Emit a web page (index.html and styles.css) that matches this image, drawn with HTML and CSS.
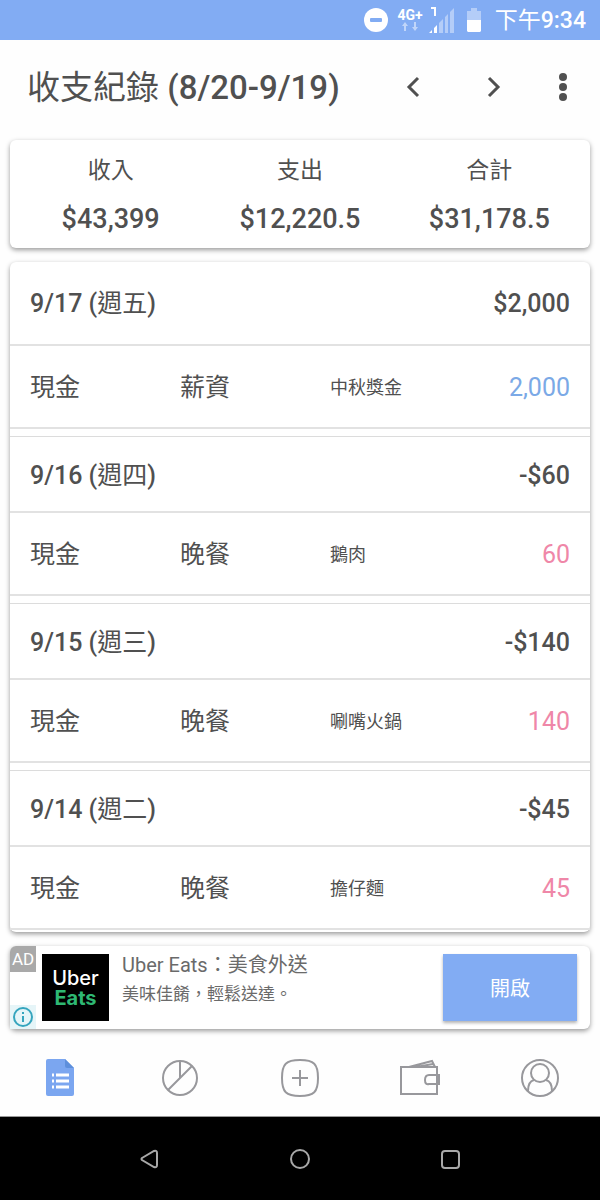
FILE: index.html
```html
<!DOCTYPE html>
<html lang="zh-Hant">
<head>
    <meta charset="UTF-8">
    <meta name="viewport" content="width=device-width, initial-scale=1">
    <title>收支紀錄</title>
    <link rel="stylesheet" href="styles.css">
</head>
<body>
<div class="status-bar">
    <svg class="dnd" width="24" height="24" viewBox="0 0 24 24">
        <circle cx="12" cy="12" r="12" fill="#fff"/>
        <rect x="6" y="10" width="12" height="4" rx="1" fill="#82acf3"/>
    </svg>
    <div class="network">
        <span>4G+</span>
        <svg width="16" height="10" viewBox="0 0 16 10" fill="#fff" opacity=".5">
            <path d="M3 0l3 4H4v5H2V4H0zM13 9l-3-4h2V0h2v5h2z"/>
        </svg>
    </div>
    <svg class="signal" width="26" height="28" viewBox="0 0 26 28">
        <path d="M2 2h4v8" fill="none" stroke="#fff" stroke-width="2"/>
        <path d="M0 27l3-3v3zM5 27v-5l3-3v8z" fill="#fff"/>
        <path d="M10 17l4-4v14h-4zM16 11l3-3v19h-3zM21 6l4-4v25h-4z" fill="#fff" opacity=".4"/>
    </svg>
    <svg class="battery" width="14" height="24" viewBox="0 0 14 24">
        <path d="M4 0h6v3h4v9H0V3h4z" fill="#fff" opacity=".4"/>
        <path d="M0 12h14v11l-1 1H1l-1-1z" fill="#fff"/>
    </svg>
    <span class="time"><span class="cjk">下午</span>9:34</span>
</div>

<header class="title-bar">
    <h1><span class="cjk">收支紀錄</span> (8/20-9/19)</h1>
    <button type="button" class="icon-btn" aria-label="上個月">
        <svg width="24" height="24" viewBox="0 0 24 24" fill="none" stroke="#505050" stroke-width="3"><path d="M17 3L8 12l9 9"/></svg>
    </button>
    <button type="button" class="icon-btn" aria-label="下個月">
        <svg width="24" height="24" viewBox="0 0 24 24" fill="none" stroke="#505050" stroke-width="3"><path d="M8 3l9 9-9 9"/></svg>
    </button>
    <button type="button" class="icon-btn more" aria-label="更多">
        <svg width="8" height="28" viewBox="0 0 8 28" fill="#505050"><circle cx="4" cy="4" r="4"/><circle cx="4" cy="14" r="4"/><circle cx="4" cy="24" r="4"/></svg>
    </button>
</header>

<main>
    <dl class="card summary">
        <div><dt>收入</dt><dd>$43,399</dd></div>
        <div><dt>支出</dt><dd>$12,220.5</dd></div>
        <div><dt>合計</dt><dd>$31,178.5</dd></div>
    </dl>

    <div class="card records">
        <section class="day">
            <h2><span>9/17 (<span class="cjk">週五</span>)</span><span>$2,000</span></h2>
            <table>
                <tr><td class="account">現金</td><td class="type">薪資</td><td class="memo">中秋獎金</td><td class="amount income">2,000</td></tr>
            </table>
        </section>
        <section class="day">
            <h2><span>9/16 (<span class="cjk">週四</span>)</span><span>-$60</span></h2>
            <table>
                <tr><td class="account">現金</td><td class="type">晚餐</td><td class="memo">鵝肉</td><td class="amount">60</td></tr>
            </table>
        </section>
        <section class="day">
            <h2><span>9/15 (<span class="cjk">週三</span>)</span><span>-$140</span></h2>
            <table>
                <tr><td class="account">現金</td><td class="type">晚餐</td><td class="memo">唰嘴火鍋</td><td class="amount">140</td></tr>
            </table>
        </section>
        <section class="day">
            <h2><span>9/14 (<span class="cjk">週二</span>)</span><span>-$45</span></h2>
            <table>
                <tr><td class="account">現金</td><td class="type">晚餐</td><td class="memo">擔仔麵</td><td class="amount">45</td></tr>
            </table>
        </section>
    </div>

    <aside class="card ad">
        <div class="ad-side">
            <span class="ad-tag">AD</span>
            <a href="#" class="ad-info" aria-label="廣告資訊">
                <svg width="20" height="20" viewBox="0 0 20 20" fill="none" stroke="#35a5be" stroke-width="2"><circle cx="10" cy="10" r="9"/><path d="M10 9v6M10 5v2"/></svg>
            </a>
        </div>
        <div class="ad-logo"><span>Uber</span><span class="eats">Eats</span></div>
        <div class="ad-text">
            <p class="ad-title">Uber Eats：美食外送</p>
            <p class="ad-desc">美味佳餚，輕鬆送達。</p>
        </div>
        <button type="button" class="open-btn">開啟</button>
    </aside>
</main>

<nav class="tabs">
    <a href="#" aria-label="紀錄">
        <svg width="40" height="40" viewBox="0 0 40 40">
            <path d="M8 1h17l9 9v26a2 2 0 0 1-2 2H8a2 2 0 0 1-2-2V3a2 2 0 0 1 2-2z" fill="#7ba6f0"/>
            <path d="M25 1l9 9h-7a2 2 0 0 1-2-2z" fill="#5e8fdc"/>
            <path d="M12 17h2M16 17h13M12 23h2M16 23h13M12 29h2M16 29h13" stroke="#fff" stroke-width="3"/>
        </svg>
    </a>
    <a href="#" aria-label="圖表">
        <svg width="40" height="40" viewBox="0 0 40 40" class="line"><circle cx="20" cy="20" r="17"/><path d="M20 3v17M32 8L8 32"/></svg>
    </a>
    <a href="#" aria-label="新增">
        <svg width="40" height="40" viewBox="0 0 40 40" class="line"><path d="M20 2c14 0 18 4 18 18s-4 18-18 18S2 34 2 20 6 2 20 2z"/><path d="M20 12v16M12 20h16"/></svg>
    </a>
    <a href="#" aria-label="帳戶">
        <svg width="40" height="40" viewBox="0 0 40 40" class="line"><path d="M1 9h36v27H1zM9 9l23-6 3 6M16 9l17-3M39 17H29q-4 0-4 5t4 4h10z"/></svg>
    </a>
    <a href="#" aria-label="個人">
        <svg width="40" height="40" viewBox="0 0 40 40" class="line"><circle cx="20" cy="20" r="18"/><circle cx="20" cy="15" r="9"/><path d="M8 33c0-6 2-10 6-11M32 33c0-6-2-10-6-11"/></svg>
    </a>
</nav>

<div class="system-nav">
    <button type="button" aria-label="返回"><svg width="20" height="20" viewBox="0 0 20 20"><path d="M2 9L14 2q3-1 3 2v12q0 3-3 2L2 11q-1-1 0-2z"/></svg></button>
    <button type="button" aria-label="主畫面"><svg width="20" height="20" viewBox="0 0 20 20"><circle cx="10" cy="10" r="9"/></svg></button>
    <button type="button" aria-label="最近使用"><svg width="20" height="20" viewBox="0 0 20 20"><rect x="2" y="2" width="17" height="17" rx="3"/></svg></button>
</div>
</body>
</html>
```
FILE: styles.css
```css
*{
    margin: 0;
    padding: 0;
    box-sizing: border-box;
}
body{
    min-height: 100vh;
    display: flex;
    flex-direction: column;
    background-color: #fefefe;
    color: #505050;
    font-family: Roboto, "Noto Sans CJK TC", sans-serif;
}
a{
    text-decoration: none;
}
button{
    border: none;
    background: none;
    font-family: inherit;
    cursor: pointer;
}
svg{
    display: block;
}
.cjk{
    font-weight: 400;
}

/* status bar */
.status-bar{
    display: flex;
    align-items: center;
    justify-content: flex-end;
    height: 40px;
    padding-right: 14px;
    background-color: #82acf3;
    color: #fff;
}
.network{
    display: flex;
    flex-direction: column;
    align-items: center;
    margin: 0 6px 0 10px;
    font-size: 14px;
    line-height: 14px;
    font-weight: 700;
}
.battery{
    margin: 0 14px 0 12px;
}
.time{
    padding-top: 2px;
    font-size: 23px;
    font-weight: 500;
    line-height: 38px;
}

/* title bar */
.title-bar{
    display: flex;
    align-items: center;
    height: 94px;
    padding: 0 17px 0 27px;
}
.title-bar h1{
    flex: 1;
    padding-top: 2px;
    font-size: 33px;
    font-weight: 500;
    line-height: 48px;
    white-space: nowrap;
}
.icon-btn{
    display: flex;
    justify-content: center;
    align-items: center;
    width: 80px;
    height: 48px;
}
.icon-btn.more{
    width: 40px;
    margin-left: 10px;
}

/* cards */
main{
    display: flex;
    flex-direction: column;
    gap: 14px;
    padding: 6px 10px 0;
}
.card{
    border-radius: 6px;
    background-color: #fff;
    box-shadow: 0 2px 5px rgba(0,0,0,0.4);
}
.summary{
    display: grid;
    grid-template-columns: 1fr 1fr 1fr;
    padding: 13px 6px 11px;
    text-align: center;
}
.summary dt{
    font-size: 23px;
    line-height: 36px;
}
.summary dd{
    margin-top: 12px;
    font-size: 27px;
    font-weight: 500;
    line-height: 36px;
}
.records{
    padding: 0 0 2px;
}
.day + .day{
    margin-top: 7px;
    border-top: 1px solid #dcdcdc;
}
.day h2{
    display: flex;
    justify-content: space-between;
    align-items: center;
    height: 84px;
    padding: 2px 20px 0;
    border-bottom: 2px solid #e2e2e2;
    font-size: 25px;
    font-weight: 500;
    line-height: 36px;
}
.day + .day h2{
    height: 76px;
    padding-top: 4px;
}
.day table{
    width: 100%;
    table-layout: fixed;
    border-collapse: collapse;
    border-bottom: 2px solid #e2e2e2;
}
.day td{
    height: 82px;
    padding-top: 3px;
    font-size: 25px;
    line-height: 36px;
}
.day td.account{
    width: 170px;
    padding-left: 20px;
}
.day td.type{
    width: 150px;
}
.day td.memo{
    font-size: 18px;
}
.day td.amount{
    padding-right: 20px;
    text-align: right;
    color: #ef87a8;
}
.day td.income{
    color: #7ba9e6;
}

/* advert */
.ad{
    display: flex;
    padding-right: 13px;
}
.ad-side{
    display: flex;
    flex-direction: column;
    justify-content: space-between;
    width: 26px;
    margin-right: 6px;
}
.ad-tag{
    border-radius: 6px 0 0 0;
    background-color: #a9a9a9;
    color: #fff;
    font-size: 17px;
    line-height: 26px;
    text-align: center;
}
.ad-info{
    padding: 2px 3px;
    background-color: #e6f5f8;
}
.ad-logo{
    display: flex;
    flex-direction: column;
    justify-content: center;
    width: 67px;
    height: 67px;
    margin: 8px 13px 8px 0;
    background-color: #000;
    color: #fff;
    font-family: Inter, sans-serif;
    font-size: 20px;
    font-weight: 500;
    line-height: 20px;
    text-align: center;
}
.eats{
    color: #2eb873;
    font-weight: 700;
}
.ad-text{
    flex: 1;
    padding-top: 4px;
    color: #6a6a6a;
}
.ad-title{
    font-size: 20px;
    line-height: 30px;
}
.ad-desc{
    font-size: 17px;
    line-height: 28px;
}
.open-btn{
    width: 134px;
    margin: 8px 0;
    background-color: #82acf3;
    box-shadow: 0 2px 3px rgba(0,0,0,0.3);
    color: #fff;
    font-size: 20px;
}

/* bottom tabs */
.tabs{
    flex: 1;
    display: flex;
    align-items: center;
    padding-top: 11px;
}
.tabs a{
    flex: 1;
    display: flex;
    justify-content: center;
}
.line{
    fill: none;
    stroke: #98989c;
    stroke-width: 2;
}

/* android navigation */
.system-nav{
    display: flex;
    justify-content: center;
    gap: 100px;
    height: 84px;
    border-top: 1px solid #999;
    background-color: #000;
}
.system-nav button{
    display: flex;
    justify-content: center;
    align-items: center;
    width: 50px;
}
.system-nav svg{
    fill: none;
    stroke: #a8a8a8;
    stroke-width: 2;
}
```
